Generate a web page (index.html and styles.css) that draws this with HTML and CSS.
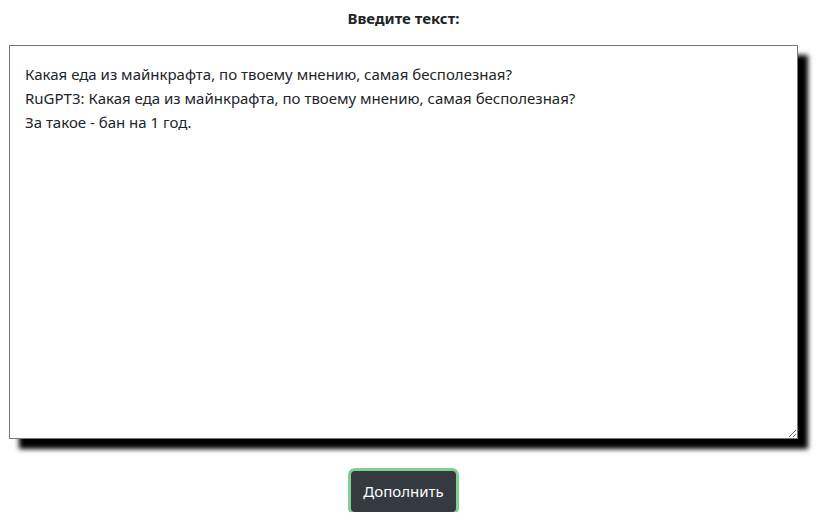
FILE: index.html
```html
<!DOCTYPE html>
<html lang="ru">
<head>
  <meta charset="UTF-8">
  <meta name="viewport" content="width=device-width, initial-scale=1.0">
  <title>RuGPT3</title>
  <link rel="stylesheet" href="styles.css">
</head>
<body>
  <main class="form-box">
    <label for="prompt" class="form-label">Введите текст:</label>
    <textarea id="prompt" class="prompt-area">Какая еда из майнкрафта, по твоему мнению, самая бесполезная?
RuGPT3: Какая еда из майнкрафта, по твоему мнению, самая бесполезная?
За такое - бан на 1 год.</textarea>
    <div class="button-container">
      <button id="complete-button" class="btn-complete">Дополнить</button>
    </div>
  </main>
</body>
</html>
```

FILE: styles.css
```css
body {
  font-family: "Noto Sans", "Open Sans", sans-serif;
  margin: 0;
  padding: 0;
  background-color: #fff;
  color: #212529;
}

.form-box {
  width: 789px;
  margin-left: 9px;
  display: flex;
  flex-direction: column;
  align-items: center;
  padding-top: 8px;
}

.form-label {
  font-weight: bold;
  font-size: 15px;
  line-height: 20px;
  margin-bottom: 17px;
}

.prompt-area {
  box-sizing: border-box;
  width: 100%;
  height: 394px;
  padding: 16px 15px;
  border: 1px solid #767676;
  font-family: inherit;
  font-size: 15px;
  line-height: 24px;
  color: #212529;
  box-shadow: 10px 10px 5px #000;
  resize: both;
}

.button-container {
  margin-top: 32px;
}

.btn-complete {
  background-color: #343a40;
  color: white;
  font-family: inherit;
  font-size: 15px;
  line-height: 24px;
  padding: 8px 12px 9px;
  border: none;
  border-radius: 4px;
  cursor: pointer;
  box-shadow: 0 0 0 3px #7fd18f;
}
```
